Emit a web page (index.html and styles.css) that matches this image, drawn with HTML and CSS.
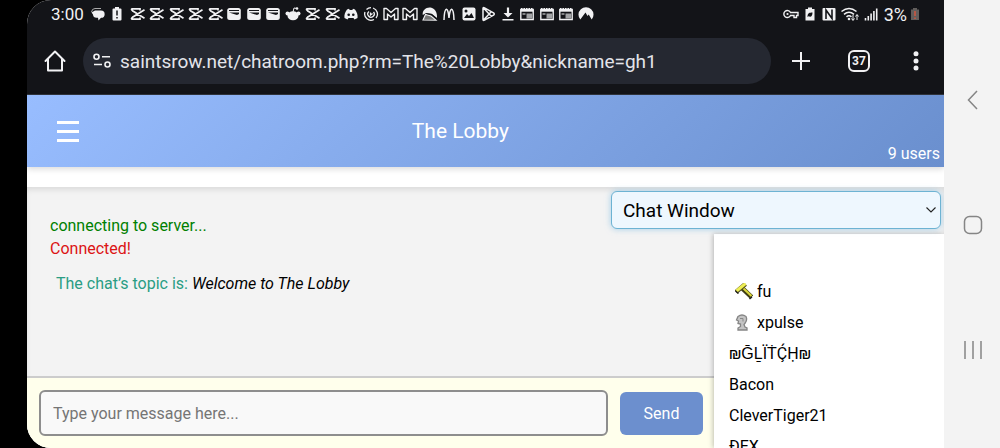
FILE: index.html
```html
<!DOCTYPE html>
<html lang="en">
<head>
<meta charset="utf-8">
<meta name="viewport" content="width=device-width, initial-scale=1">
<title>The Lobby</title>
<link rel="stylesheet" href="styles.css">
</head>
<body>
<svg class="defs" aria-hidden="true">
  <symbol id="cut" viewBox="0 0 16 16"><path d="M15.500 3.800L3.500 11.300Q1.500 13.200 3.500 13.200H11V11.500M15.500 12.200L3.500 4.700Q1.500 2.800 3.500 2.800H11V4.500" fill="none" stroke="currentColor" stroke-width="1.700"/></symbol>
  <symbol id="wallet" viewBox="0 0 16 16"><rect x="1.200" y="2" width="13.600" height="12" rx="2.500" fill="currentColor"/><path d="M3 4.500h10" stroke="#131418" stroke-width="1"/><path d="M3 6.500h10v1.500l-2 1z" fill="#131418"/></symbol>
  <symbol id="mail" viewBox="0 0 16 16"><path d="M1 13.500v-11h2.500L8 6.500l4.500-4h2.500v11h-3.500V8L8 11 4.500 8v5.500z" fill="none" stroke="currentColor" stroke-width="1.400" stroke-linejoin="round"/></symbol>
  <symbol id="calendar" viewBox="0 0 16 16"><path d="M1.800 3.500h12.400v10H1.800z" fill="none" stroke="currentColor" stroke-width="1.400"/><path d="M1.500 4.800h13" stroke="currentColor" stroke-width="1.800"/><path d="M2 2.500h12" stroke="currentColor" stroke-dasharray="1.500 1"/><path d="M3.500 8h3" stroke="currentColor"/><path d="M7.500 7.500H13v5H7.500z" fill="currentColor" opacity=".65"/></symbol>
</svg>
<div class="device">
  <div class="screen">
    <div class="status">
      <span class="clock">3:00</span>
      <div class="notices">
        <svg viewBox="0 0 16 16"><path d="M5 4.500h6a3.500 3.500 0 0 1 0 7.300L8.500 14.500 8 11.800H6.500A3.600 3.600 0 0 1 3 8.500L1.500 6.500z" fill="currentColor"/><path d="M1.500 6Q2 2.500 5 2.500h6" stroke="#aaa" fill="none"/></svg>
        <svg viewBox="0 0 16 16"><path d="M6 1h4v1.500h1.500a1 1 0 0 1 1 1v10a1 1 0 0 1-1 1h-7a1 1 0 0 1-1-1v-10a1 1 0 0 1 1-1H6z" fill="currentColor"/><path d="M8 4.500v5M8 11v1.500" stroke="#131418" stroke-width="1.500"/></svg>
        <svg><use href="#cut"/></svg><svg><use href="#cut"/></svg><svg><use href="#cut"/></svg><svg><use href="#cut"/></svg><svg><use href="#cut"/></svg>
        <svg><use href="#wallet"/></svg><svg><use href="#wallet"/></svg><svg><use href="#wallet"/></svg>
        <svg viewBox="0 0 16 16"><ellipse cx="8" cy="9.800" rx="5.500" ry="4.500" fill="currentColor"/><circle cx="2.500" cy="7.500" r="2" fill="currentColor"/><circle cx="13.500" cy="7.500" r="2" fill="currentColor"/><path d="M8 6l1-4 3 .5" fill="none" stroke="currentColor"/><circle cx="12" cy="2.500" r="1.300" fill="currentColor"/></svg>
        <svg><use href="#cut"/></svg><svg><use href="#cut"/></svg>
        <svg viewBox="0 0 16 16"><path d="M4 3.500l2-.8.700 1.300h2.600l.7-1.300 2 .8C13.800 6 15 9 14.500 12l-3 1.500-1-1.500h-5l-1 1.500-3-1.500C1 9 2.200 6 4 3.500z" fill="currentColor"/><circle cx="5.700" cy="8.800" r="1.300" fill="#131418"/><circle cx="10.300" cy="8.800" r="1.300" fill="#131418"/></svg>
        <svg viewBox="0 0 16 16"><path d="M10 2A6.300 6.300 0 0 1 13 12M11 13.500A6.300 6.300 0 0 1 2 6M3.500 3.500A6.300 6.300 0 0 1 8 1.700M6 5.500a3.200 3.200 0 1 0 4.500.5M7.500 6.500v2.500l2-1.500" fill="none" stroke="currentColor" stroke-width="1.300"/></svg>
        <svg><use href="#mail"/></svg><svg><use href="#mail"/></svg>
        <svg viewBox="0 0 16 16"><path d="M.8 9C0 4.500 4 1 8.500 1.500 13 2 15.500 7 15 12L10 8 4 7z" fill="currentColor"/><path d="M1 14l2.500-5.500L9 10l5 4.200z" fill="#777" stroke="currentColor" stroke-width="1.100"/><path d="M4.500 7.500l5 .8 5 4" stroke="#131418" stroke-width=".8" fill="none"/></svg>
        <svg viewBox="0 0 16 16"><path d="M3 14C3.500 0 7 0 8 12 9 0 12.500 0 13 14" fill="none" stroke="currentColor" stroke-width="1.500"/></svg>
        <svg viewBox="0 0 16 16"><rect x="1.500" y="1.500" width="13" height="13" rx="2" fill="currentColor"/><path d="M3 12l3-4 2 2 2.500-3L13 12z" fill="#131418"/><circle cx="5" cy="5" r="1.500" fill="#131418"/></svg>
        <svg viewBox="0 0 16 16"><path d="M3 2.500v11q0 1.500 1.500.7l9-5q1.500-1.200 0-2.400l-9-5Q3 1 3 2.500zM3.500 2l8 8.500M3.500 14l8-8.500" fill="none" stroke="currentColor" stroke-width="1.500"/></svg>
        <svg viewBox="0 0 16 16"><path d="M8 1.500v8" stroke="currentColor" stroke-width="2.200"/><path d="M3.500 7h9L8 11.500zM2.500 13h11v1.600h-11z" fill="currentColor"/></svg>
        <svg><use href="#calendar"/></svg><svg><use href="#calendar"/></svg><svg><use href="#calendar"/></svg>
        <svg viewBox="0 0 16 16"><path d="M2.300 13.500A7.500 7.500 0 1 1 13.700 13.500L10.700 8.500 9.500 10 7.500 6.500z" fill="currentColor"/></svg>
      </div>
      <div class="signals">
        <svg viewBox="0 0 16 16"><path d="M7.500 6.500h7.500v3h-1.500v2h-2.500v-2H7.500A3.500 3.500 0 1 1 7.500 6.500z" fill="none" stroke="currentColor" stroke-width="1.400"/><circle cx="4.500" cy="8" r="1.100" fill="currentColor"/></svg>
        <svg viewBox="0 0 16 16"><path d="M6 1.500h4V3h2.500v11.500h-9V3H6z" fill="currentColor"/><path d="M5.500 11c0-4 2-4.500 5-4.500 0 3.500-1.500 5-4 3.700" fill="#131418"/></svg>
        <svg viewBox="0 0 16 16"><rect x="1.500" y="2" width="13" height="12.500" rx="1" fill="currentColor"/><path d="M5 13V4l6 8.500V3.500" fill="none" stroke="#131418" stroke-width="1.600"/></svg>
        <svg class="wifi" viewBox="0 0 20 16"><path d="M1.500 5.500q7.500-6 15 0M4 8.300q5-4 10 0M6.500 10.800q2.500-2 5 0" fill="none" stroke="currentColor" stroke-width="1.600"/><circle cx="9" cy="13" r="1.300" fill="currentColor"/><path d="M13 9v5M11.500 12.500L13 14.500l1.500-2M17 14V9M15.500 10.500L17 8.500l1.500 2" fill="none" stroke="currentColor"/></svg>
        <svg viewBox="0 0 16 16"><path d="M2.500 14.500v-2.500M5.300 14.500V10M8.100 14.500V7.500M10.900 14.500V5M13.700 14.500V2.500" stroke="currentColor" stroke-width="1.600"/></svg>
        <span class="charge">3%</span>
        <svg class="low" viewBox="0 0 10 16"><path d="M3 2h4v1.500h2V14H1V3.500h2z" fill="#625e5c"/><path d="M5 5v5M5 11.500V13" stroke="#d4553e" stroke-width="1.500"/></svg>
      </div>
    </div>
    <div class="browser">
      <button class="tool" aria-label="Home"><svg viewBox="0 0 24 24" class="i24"><path d="M2.500 12L12 2.500l9.500 9.500M5 10V21.500h14V10" fill="none" stroke="currentColor" stroke-width="2" stroke-linejoin="round" stroke-linecap="round"/></svg></button>
      <label class="address">
        <svg viewBox="0 0 20 16" class="tune"><circle cx="4.500" cy="3.800" r="2.500"/><path d="M10 3.800h8M2 11.500h8"/><circle cx="15.500" cy="11.500" r="2.500"/></svg>
        <input class="url" type="text" aria-label="Address" value="saintsrow.net/chatroom.php?rm=The%20Lobby&amp;nickname=gh1">
      </label>
      <div class="tools">
        <button class="tool" aria-label="New tab"><svg viewBox="0 0 24 24" class="i24"><path d="M12 3v18M3 12h18" stroke="currentColor" stroke-width="2"/></svg></button>
        <button class="tool tabs" aria-label="Tabs">37</button>
        <button class="tool" aria-label="More"><svg viewBox="0 0 24 24" class="i24"><g fill="currentColor"><circle cx="12" cy="4.700" r="2.500"/><circle cx="12" cy="12" r="2.500"/><circle cx="12" cy="19" r="2.500"/></g></svg></button>
      </div>
    </div>
    <header class="top">
      <button class="menu" aria-label="Menu"><i></i><i></i><i></i></button>
      <h1>The Lobby</h1>
      <span class="count">9 users</span>
    </header>
    <main class="room">
      <section class="log">
        <p class="green">connecting to server...</p>
        <p class="red">Connected!</p>
        <p class="topic">The chat’s topic is: <em>Welcome to The Lobby</em></p>
      </section>
      <form class="compose">
        <input class="message" type="text" aria-label="Message" placeholder="Type your message here...">
        <button class="send" type="button">Send</button>
      </form>
      <aside class="people">
        <ul>
          <li class="ranked"><svg viewBox="0 0 18 18"><path d="M7 5l9.500 9" stroke="#3f3c14" stroke-width="4.500"/><path d="M7.500 4.500l9 8.500" stroke="#d8d63c" stroke-width="2.200"/><path d="M1 9l9.500-8" stroke="#55521c" stroke-width="4.500"/><path d="M1.500 8l9-7.500" stroke="#eeee55" stroke-width="3"/><path d="M.5 8l3 2.500M14.500 16l2.500-2" stroke="#222" stroke-width="1.500"/></svg>fu</li>
          <li class="ranked"><svg viewBox="0 0 18 18"><path d="M3 2.500Q7-.5 11 2.500q1.500 3-.5 6L9 10.500l1 2.500 2 1v2H3v-2l2.500-1.500V10L3 9.500 3.500 7 1.500 6z" fill="#c4c4c4" stroke="#858585" stroke-width="1.300"/><path d="M5 4.500h3v3" fill="none" stroke="#888"/></svg>xpulse</li>
          <li>₪ḠḺÏṪḈḤ₪</li>
          <li>Bacon</li>
          <li>CleverTiger21</li>
          <li>ĐEX</li>
        </ul>
      </aside>
      <div class="view">
        <select aria-label="View"><option>Chat Window</option></select>
        <svg viewBox="0 0 12 8"><path d="M1.500 1.500L6 6l4.500-4.500" fill="none" stroke="#222" stroke-width="1.100"/></svg>
      </div>
    </main>
  </div>
  <nav class="keys">
    <button aria-label="Back"><svg viewBox="0 0 20 20"><path d="M14 1L5.500 10l8.500 9" fill="none" stroke="currentColor" stroke-width="1.500"/></svg></button>
    <button aria-label="Home"><svg viewBox="0 0 20 20"><rect x="1.500" y="1.500" width="17" height="17" rx="5" fill="none" stroke="currentColor" stroke-width="1.500"/></svg></button>
    <button aria-label="Recents"><svg viewBox="0 0 20 20"><path d="M2 1v18M10 1v18M18 1v18" stroke="currentColor" stroke-width="1.500"/></svg></button>
  </nav>
</div>
</body>
</html>
```
FILE: styles.css
```css
* { box-sizing: border-box; }
body { margin: 0; background: #000; font-family: Roboto, "Liberation Sans", sans-serif; font-size: 16px; color: #000; }
button, input, select { font: inherit; color: inherit; margin: 0; padding: 0; border: 0; background: none; }
button { display: flex; align-items: center; justify-content: center; }
h1, p, ul { margin: 0; padding: 0; font-weight: 400; }
svg { display: block; flex: none; }
.defs { position: absolute; width: 0; height: 0; }

.device { display: grid; grid-template-columns: minmax(0, 1fr) 56px; height: 100vh; padding-left: 27px; }
.screen { display: flex; flex-direction: column; min-height: 0; overflow: hidden; border-radius: 24px 0 0 24px; background: #fff; }

.status { display: flex; align-items: center; height: 28px; padding: 0 24px; background: #131418; color: #f1f1f3; }
.clock { font-size: 17px; }
.charge { margin-left: 2px; font-size: 18px; }
.notices { display: flex; justify-content: space-between; width: 504px; margin-left: 6px; }
.notices svg, .signals svg { width: 16px; height: 16px; }
.signals { display: flex; align-items: center; gap: 3px; margin-left: auto; }
.signals .wifi { width: 20px; }
.signals .low { width: 10px; }

.browser { display: flex; align-items: center; height: 67px; padding: 0 16px; background: #131418; color: #f1f1f3; border-bottom: 1px solid #30343c; }
.tool { width: 24px; height: 24px; }
.i24 { width: 24px; height: 24px; }
.address { display: flex; flex: 1; align-items: center; gap: 8px; height: 46px; margin-left: 16px; padding: 0 9px; border-radius: 23px; background: #252831; }
.tune { width: 20px; height: 16px; fill: none; stroke: currentColor; stroke-width: 1.6; }
.url { flex: 1; min-width: 0; font-size: 19px; color: #e3e4ea; }
.tools { display: flex; gap: 34px; margin-left: 18px; }
.tabs { width: 22px; height: 22px; margin: 1px 0 0 1px; border: 2px solid #f1f1f3; border-radius: 6px; font-size: 12px; font-weight: 700; }

.top { display: grid; grid-template-columns: 1fr auto 1fr auto; align-items: center; height: 72px; padding: 0 4px 0 6px; background: linear-gradient(135deg, #98bdff, #6a8fce); color: #fff; box-shadow: 0 2px 6px rgba(0, 0, 0, .15); }
.menu { flex-direction: column; gap: 6px; width: 22px; margin-left: 24px; }
.menu i { width: 22px; height: 3px; background: #fff; }
.top h1 { font-size: 21px; }
.count { grid-column: 4; align-self: end; padding-bottom: 4px; }

.room { position: relative; display: grid; flex: 1; grid-template: minmax(0, 1fr) auto / minmax(0, 1fr) 230px; min-height: 0; margin-top: 20px; background: #f3f3f3; box-shadow: inset 0 4px 6px -2px rgba(0, 0, 0, .12); }
.log { padding: 27px 23px; line-height: 23px; }
.green { color: #008000; }
.red { color: #dc1414; }
.topic { margin-top: 12px; padding-left: 6px; color: #2a9d84; }
.topic em { color: #000; }
.compose { display: flex; align-items: center; gap: 12px; padding: 12px 11px 12px 12px; border-top: 2px solid #ccc; background: #ffffec; }
.message { flex: 1; min-width: 0; height: 46px; padding: 0 12px; border: 2px solid #8e8e8e; border-radius: 6px; background: #f9f9f9; }
.message::placeholder { color: #757575; opacity: 1; }
.send { width: 83px; height: 43px; border-radius: 6px; background: #6c8fce; color: #fff; }
.people { grid-area: 1 / 2 / 3 / 3; margin-top: 47px; padding: 42px 15px 0; overflow: hidden; min-height: 0; background: #fff; box-shadow: -1px 0 5px rgba(0, 0, 0, .25); }
.people ul { list-style: none; }
.people li { display: flex; align-items: center; height: 31px; white-space: nowrap; }
.people .ranked { gap: 4px; padding-left: 6px; }
.people svg { width: 18px; height: 18px; }
.view { position: absolute; top: 4px; right: 3px; width: 330px; }
.view select { display: block; width: 100%; height: 38px; padding: 0 11px; appearance: none; border: 1px solid #6db3d3; border-radius: 6px; background: #eef7fe; box-shadow: 0 0 6px rgba(110, 180, 225, .6); font-size: 19px; }
.view svg { position: absolute; top: 15px; right: 4px; width: 12px; height: 8px; pointer-events: none; }

.keys { display: flex; flex-direction: column; align-items: center; justify-content: space-around; padding: 37px 0 35px 2px; background: #f3f3f3; color: #858585; }
.keys svg { width: 20px; height: 20px; }
```
